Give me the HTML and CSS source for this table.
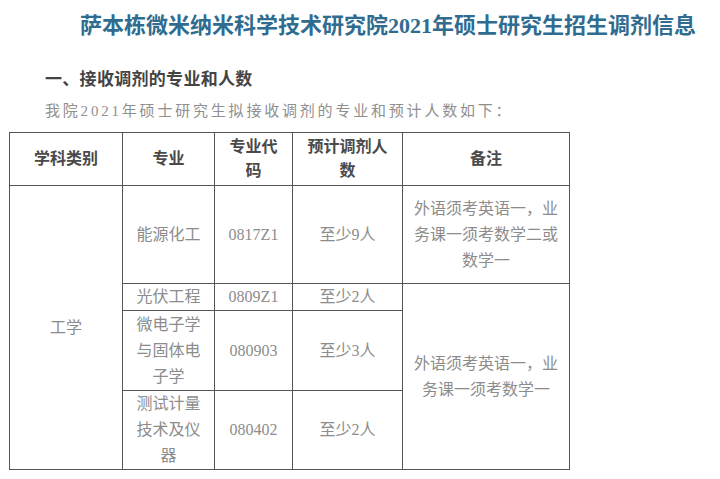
FILE: index.html
```html
<!DOCTYPE html>
<html lang="zh-CN">
<head>
<meta charset="utf-8">
<title>萨本栋微米纳米科学技术研究院2021年硕士研究生招生调剂信息</title>
<link rel="stylesheet" href="styles.css">
</head>
<body>
<div class="page">
  <h1 class="title">萨本栋微米纳米科学技术研究院2021年硕士研究生招生调剂信息</h1>
  <h2 class="section">一、接收调剂的专业和人数</h2>
  <p class="intro">我院2021年硕士研究生拟接收调剂的专业和预计人数如下：</p>
  <table class="plan">
    <colgroup>
      <col class="c1"><col class="c2"><col class="c3"><col class="c4"><col class="c5">
    </colgroup>
    <thead>
      <tr class="r-head">
        <th>学科类别</th>
        <th>专业</th>
        <th>专业代<br>码</th>
        <th>预计调剂人<br>数</th>
        <th>备注</th>
      </tr>
    </thead>
    <tbody>
      <tr class="r1">
        <td rowspan="4">工学</td>
        <td>能源化工</td>
        <td>0817Z1</td>
        <td>至少9人</td>
        <td>外语须考英语一，业<br>务课一须考数学二或<br>数学一</td>
      </tr>
      <tr class="r2">
        <td>光伏工程</td>
        <td>0809Z1</td>
        <td>至少2人</td>
        <td rowspan="3">外语须考英语一，业<br>务课一须考数学一</td>
      </tr>
      <tr class="r3">
        <td>微电子学<br>与固体电<br>子学</td>
        <td>080903</td>
        <td>至少3人</td>
      </tr>
      <tr class="r4">
        <td>测试计量<br>技术及仪<br>器</td>
        <td>080402</td>
        <td>至少2人</td>
      </tr>
    </tbody>
  </table>
</div>
</body>
</html>
```
FILE: styles.css
```css
html, body {
  margin: 0;
  padding: 0;
  background: #ffffff;
}

body {
  font-family: "Liberation Serif", "Noto Sans CJK SC", serif;
}

.page {
  padding-top: 11px;
}

.title {
  margin: 0 0 0 80px;
  font-size: 22px;
  line-height: 30px;
  font-weight: 700;
  color: #2f6c8f;
  white-space: nowrap;
}

.section {
  margin: 27px 0 0 45px;
  font-size: 17px;
  line-height: 24px;
  font-weight: 700;
  color: #444444;
  letter-spacing: 0.3px;
}

.intro {
  margin: 8px 0 0 45px;
  font-size: 15px;
  line-height: 22px;
  color: #8f8f8f;
  letter-spacing: 2.8px;
}

.plan {
  margin: 10px 0 0 9px;
  border-collapse: collapse;
  table-layout: fixed;
  width: 560px;
}

.plan .c1 { width: 113px; }
.plan .c2 { width: 92px; }
.plan .c3 { width: 78px; }
.plan .c4 { width: 110px; }
.plan .c5 { width: 167px; }

.plan th,
.plan td {
  border: 1px solid #555555;
  padding: 0 6px;
  text-align: center;
  vertical-align: middle;
}

.plan th {
  font-size: 16px;
  line-height: 24px;
  font-weight: 700;
  color: #4a4a4a;
}

.plan td {
  font-size: 16px;
  line-height: 26px;
  color: #8c8c8c;
}

.r-head { height: 53px; }
.r1 { height: 98px; }
.r2 { height: 25px; }
.r3 { height: 80px; }
.r4 { height: 79px; }
```
